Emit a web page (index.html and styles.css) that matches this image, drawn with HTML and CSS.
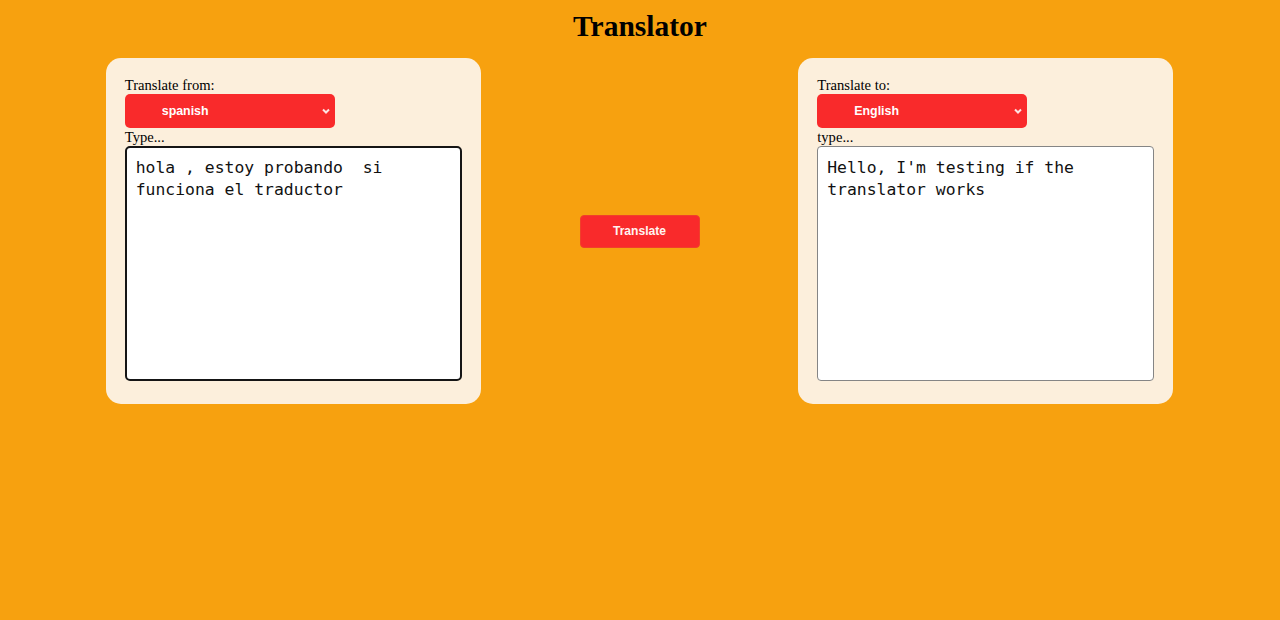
FILE: index.html
```html
<!DOCTYPE html>
<html lang="en">
<head>
<meta charset="utf-8">
<title>Translator</title>
<link rel="stylesheet" href="styles.css">
</head>
<body>
<h1 class="title">Translator</h1>
<div class="row">
  <div class="card">
    <label class="lbl">Translate from:</label>
    <div class="select-wrap">
      <select class="lang"><option>spanish</option></select>
      <svg class="chev" width="8" height="6" viewBox="0 0 8 6"><path d="M1 1.5 L4 4.5 L7 1.5" fill="none" stroke="#fde3e3" stroke-width="2"/></svg>
    </div>
    <label class="lbl lbl-type">Type...</label>
    <textarea class="box box-focus">hola , estoy probando  si funciona el traductor</textarea>
  </div>
  <button class="go">Translate</button>
  <div class="card">
    <label class="lbl">Translate to:</label>
    <div class="select-wrap">
      <select class="lang"><option>English</option></select>
      <svg class="chev" width="8" height="6" viewBox="0 0 8 6"><path d="M1 1.5 L4 4.5 L7 1.5" fill="none" stroke="#fde3e3" stroke-width="2"/></svg>
    </div>
    <label class="lbl lbl-type">type...</label>
    <textarea class="box box-plain">Hello, I'm testing if the translator works</textarea>
  </div>
</div>
</body>
</html>
```

FILE: styles.css
```css
html, body {
  margin: 0;
  padding: 0;
}
body {
  background: #f7a10f;
  font-family: "Liberation Serif", "Times New Roman", serif;
  color: #000;
  height: 620px;
  overflow: hidden;
}
.title {
  margin: 0;
  padding-top: 10px;
  text-align: center;
  font-size: 29.5px;
  font-weight: bold;
  line-height: 33px;
}
.row {
  display: flex;
  justify-content: space-evenly;
  align-items: center;
  margin: 15px 8px 0 7px;
}
.card {
  width: 375px;
  box-sizing: border-box;
  height: 346px;
  background: #fcefdc;
  border-radius: 15px;
  padding: 19px 19px 0;
  display: flex;
  flex-direction: column;
  align-items: flex-start;
}
.lbl {
  display: block;
  font-size: 14.6px;
  line-height: 16.5px;
}
.lbl-type {
  height: 18px;
  line-height: 18px;
}
.select-wrap {
  position: relative;
  width: 210px;
  height: 34px;
}
.lang {
  appearance: none;
  -webkit-appearance: none;
  width: 210px;
  height: 34px;
  border: none;
  border-radius: 5px;
  background: #f92a2b;
  color: #fff;
  font-family: "Liberation Sans", Arial, sans-serif;
  font-weight: bold;
  font-size: 12.4px;
  padding: 0 0 0 37px;
  margin: 0;
  outline: none;
}
.chev {
  position: absolute;
  right: 5px;
  top: 14px;
  pointer-events: none;
}
.box {
  width: 337px;
  height: 235px;
  box-sizing: border-box;
  margin: 0;
  resize: none;
  background: #fff;
  font-family: "DejaVu Sans Mono", "Liberation Mono", monospace;
  font-size: 16.4px;
  line-height: 22px;
  color: #111;
  outline: none;
  overflow: hidden;
}
.box-focus {
  border: 2px solid #151515;
  border-radius: 5px;
  padding: 9px 9px 8px;
}
.box-plain {
  border: 1px solid #858585;
  border-radius: 4px;
  padding: 10px 9px 9px;
}
.go {
  width: 120px;
  height: 33px;
  margin: 0;
  border: 1px solid #f0402a;
  border-radius: 4px;
  background: #f92a2b;
  color: #fff4f0;
  font-family: "Liberation Sans", Arial, sans-serif;
  font-weight: bold;
  font-size: 12.1px;
  padding: 0;
}
```
